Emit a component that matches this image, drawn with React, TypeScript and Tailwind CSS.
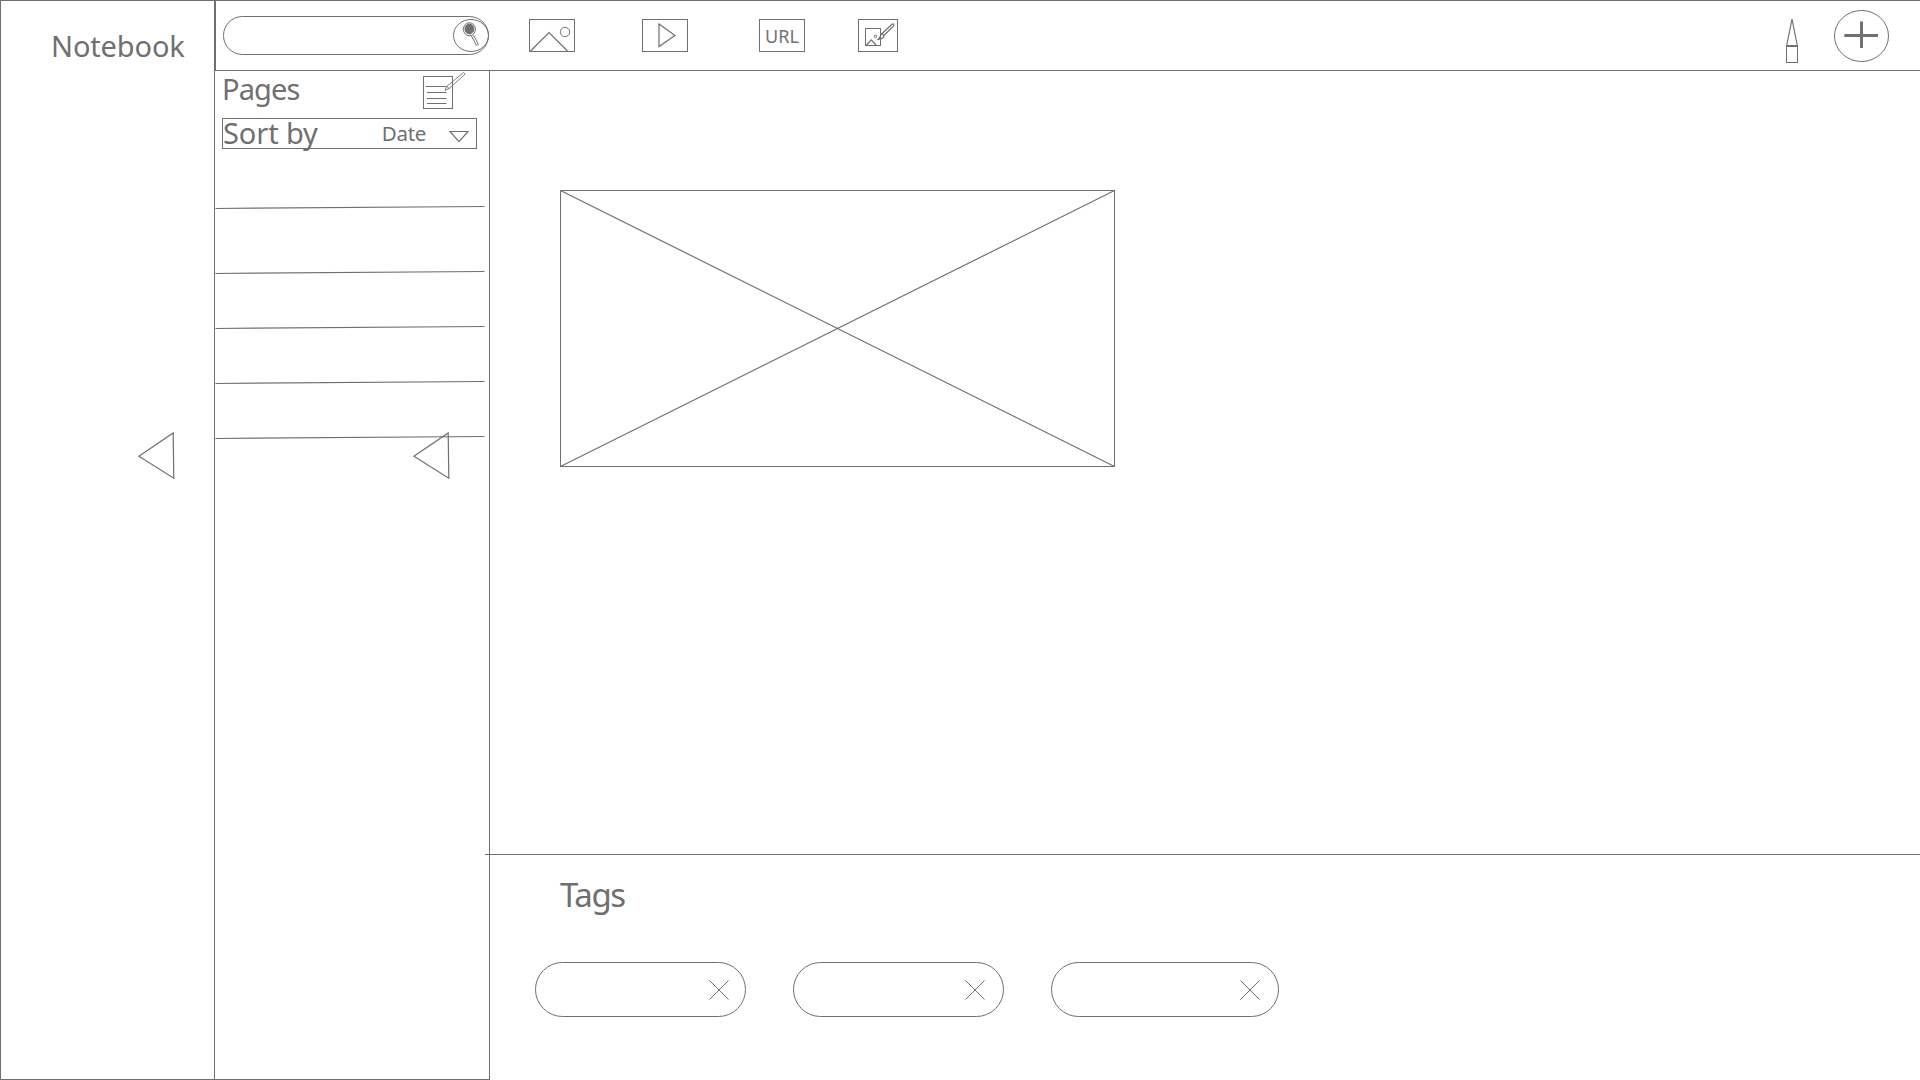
import type { ReactNode } from 'react';

type DrawingProps = { w: number; h: number; className?: string; children: ReactNode };

function Drawing({ w, h, className = '', children }: DrawingProps) {
  return (
    <svg
      width={w}
      height={h}
      viewBox={`0 0 ${w} ${h}`}
      fill="none"
      stroke="#707070"
      strokeWidth="1"
      className={`block shrink-0 overflow-visible ${className}`}
    >
      {children}
    </svg>
  );
}

function SearchBox() {
  return (
    <div className="ml-[7px] flex h-[39px] w-[266px] shrink-0 items-center justify-end rounded-full border border-[#707070]">
      <button className="-mr-px h-[33px] w-9" aria-label="Search">
        <Drawing w={36} h={33}>
          <ellipse cx="18" cy="16.5" rx="17.5" ry="16" />
          <ellipse cx="16.4" cy="10.3" rx="6" ry="6.5" />
          <ellipse cx="16.4" cy="10" rx="4.4" ry="4.9" fill="#707070" />
          <path d="M18.4 16.7 L23.3 26.4 L25.4 25.3 L20.3 15.8" />
        </Drawing>
      </button>
    </div>
  );
}

function Collapse({ className }: { className: string }) {
  return (
    <button className={className} aria-label="Collapse">
      <Drawing w={36} h={47}>
        <path d="M35.2 0.9 L35.8 46.2 L0.9 24.2 Z" strokeWidth="1.2" />
      </Drawing>
    </button>
  );
}

function Tag({ className }: { className: string }) {
  return (
    <div className={`flex h-[55px] items-center rounded-full border border-[#707070] ${className}`}>
      <button aria-label="Remove tag" className="ml-auto">
        <Drawing w={20} h={20}>
          <path d="M0.5 0.5 L19.5 19.5 M19.5 0.5 L0.5 19.5" />
        </Drawing>
      </button>
    </div>
  );
}

const ruleGaps = ['mt-[57px]', 'mt-[62px]', 'mt-[52px]', 'mt-[52px]', 'mt-[52px]'];

export default function App() {
  return (
    <div className="flex h-[1080px] w-[1920px] overflow-hidden bg-white font-['Noto_Sans',sans-serif] text-[#707070]">
      <aside className="flex w-[215px] shrink-0 flex-col border border-[#707070]">
        <h1 className="mt-[25px] ml-[50px] text-[29px] leading-10 tracking-[-0.15px] whitespace-nowrap">Notebook</h1>
        <Collapse className="mt-[366px] ml-[137px] w-9" />
      </aside>

      <div className="flex min-w-0 flex-1 flex-col">
        <header className="flex h-[71px] shrink-0 items-center border-y border-l border-[#707070]">
          <SearchBox />
          <Drawing w={46} h={33} className="ml-10">
            <rect x="0.5" y="0.5" width="45" height="32" />
            <path d="M1.5 32 L20 13.5 L38.5 32" strokeWidth="1.2" />
            <circle cx="36" cy="13" r="4.7" />
          </Drawing>
          <Drawing w={46} h={33} className="ml-[67px]">
            <rect x="0.5" y="0.5" width="45" height="32" />
            <path d="M17 5 L33 16.5 L17 27.5 Z" strokeWidth="1.2" />
          </Drawing>
          <div className="ml-[71px] flex h-[33px] w-[46px] items-center justify-center border border-[#707070] text-[18px] leading-none">
            <span>URL</span>
          </div>
          <Drawing w={40} h={33} className="ml-[53px]">
            <rect x="0.5" y="0.5" width="39" height="32" />
            <rect x="7.5" y="9.5" width="15" height="17" />
            <path d="M8.5 26 L13.2 20.8 L18 26" strokeWidth="1.2" />
            <circle cx="17.5" cy="17.4" r="1.2" />
            <path d="M24 14.5 L34 5.2 C35.5 4.2 36.5 5.5 35.5 6.8 L26 16.5" strokeWidth="1.2" />
            <path d="M24 14.5 C22 15.5 22.8 18.5 20.3 20.3 C23.5 20.3 26.2 19 26 16.5 Z" strokeWidth="1.2" />
          </Drawing>
          <Drawing w={12} h={46} className="mt-2 ml-auto">
            <path d="M6 2 L0.6 29 M6 2 L11.4 29" strokeWidth="1.2" />
            <rect x="0.5" y="29.5" width="11" height="16" />
            <path d="M0 29 H12" strokeWidth="2" />
          </Drawing>
          <button className="mr-[31px] ml-9" aria-label="Add">
            <Drawing w={55} h={52}>
              <ellipse cx="27.5" cy="26" rx="27" ry="25.5" />
              <path d="M10.3 25.5 H44 M27.5 11.5 V38" strokeWidth="3" />
            </Drawing>
          </button>
        </header>

        <div className="flex min-h-0 flex-1">
          <section className="flex w-[275px] shrink-0 flex-col border-r border-b border-[#707070]">
            <div className="flex h-[47px] items-start">
              <h2 className="-mt-0.5 ml-[7px] text-[29px] leading-10 tracking-[-0.9px]">Pages</h2>
              <Drawing w={43} h={38} className="mr-[23px] ml-auto">
                <rect x="0.5" y="5.5" width="29" height="32" />
                <path d="M2.5 15.5 H23.5 M4 21.5 H23.5 M4 27.5 H23.5 M4 32.5 H23.5" />
                <path
                  d="M22 19.3 L24 15.2 L40.5 1.5 L42.1 3.1 L26 17.6 Z M24 15.2 L26 17.6"
                  strokeWidth="0.9"
                />
              </Drawing>
            </div>
            <div className="ml-[7px] flex h-[31px] w-[255px] items-center border border-[#707070]">
              <span className="-mt-0.5 text-[29px] leading-[29px] tracking-[-0.1px] whitespace-nowrap">Sort by</span>
              <span className="-mt-px mr-[23px] ml-auto text-[20.5px] leading-5 tracking-[-0.3px]">Date</span>
              <Drawing w={20} h={12} className="mt-[5px] mr-[7px]">
                <path d="M1 1.5 H19 L10 11.6 Z" strokeWidth="1.2" />
              </Drawing>
            </div>
            {ruleGaps.map((gap, i) => (
              <Drawing key={i} w={270} h={3} className={gap}>
                <path d="M0.5 2.5 L269.5 0.5" strokeWidth="1.2" />
              </Drawing>
            ))}
            <Collapse className="-mt-[7px] ml-[198px] w-9" />
          </section>

          <main className="flex min-w-0 flex-1 flex-col">
            <div className="h-[783px] shrink-0 pt-[119px] pl-[70px]">
              <Drawing w={555} h={277}>
                <rect x="0.5" y="0.5" width="554" height="276" />
                <path d="M0.5 0.5 L554.5 276.5 M554.5 0.5 L0.5 276.5" strokeWidth="1.2" />
              </Drawing>
            </div>
            <section className="relative -ml-[5px] flex-1 border-t border-[#707070] pl-[50px]">
              <h2 className="mt-[18px] ml-[25px] text-[33px] leading-[44px] tracking-[-1.4px]">Tags</h2>
              <div className="mt-[45px] flex">
                <Tag className="w-[211px] pr-[16px]" />
                <Tag className="ml-[47px] w-[211px] pr-[18px]" />
                <Tag className="ml-[47px] w-[228px] pr-[18px]" />
              </div>
            </section>
          </main>
        </div>
      </div>
    </div>
  );
}
